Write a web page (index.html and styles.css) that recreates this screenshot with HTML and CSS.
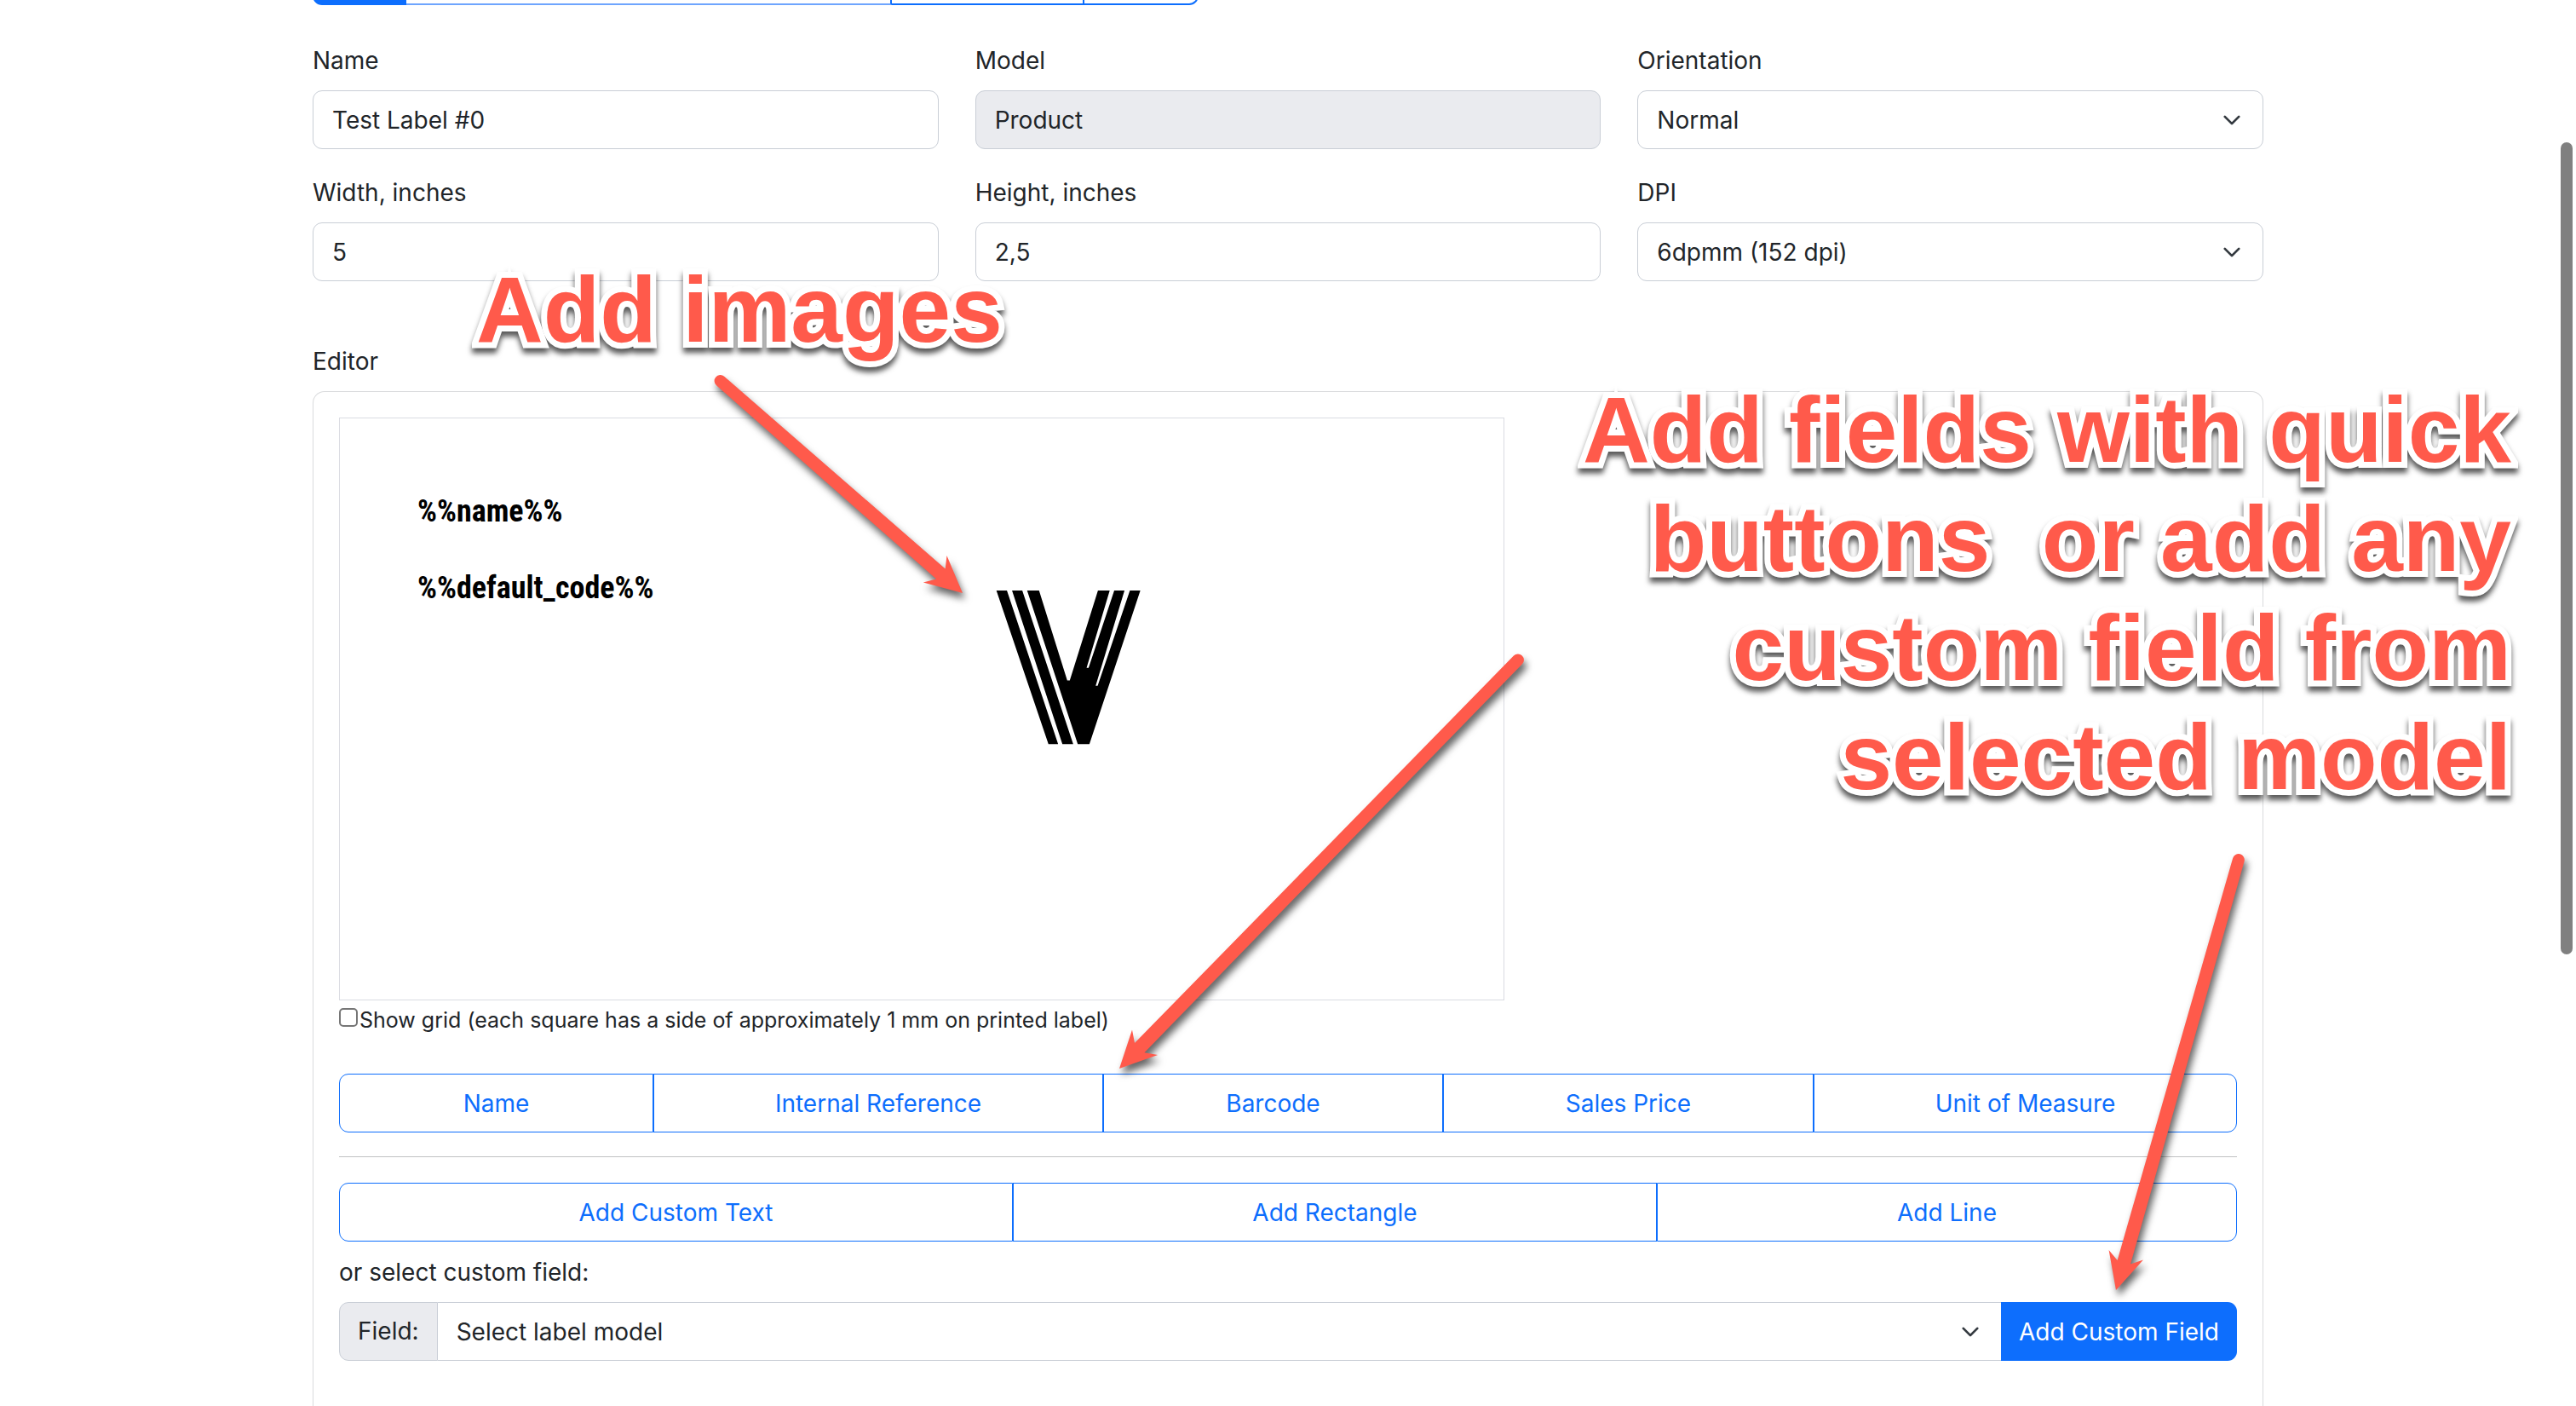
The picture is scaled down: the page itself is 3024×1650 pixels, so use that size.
FILE: index.html
```html
<!DOCTYPE html>
<html lang="en">
<head>
<meta charset="utf-8">
<title>Label editor</title>
<link rel="stylesheet" href="styles.css">
</head>
<body>
<main class="page">
  <div class="toolbar">
    <button class="tool tool-solid" type="button" aria-label="Save"></button>
    <button class="tool tool-muted" type="button" aria-label="Preview" disabled></button>
    <button class="tool" type="button" aria-label="Copy"></button>
    <button class="tool" type="button" aria-label="Close"></button>
  </div>

  <form class="settings">
    <div class="field">
      <label class="label" for="name">Name</label>
      <input class="control" id="name" type="text" value="Test Label #0">
    </div>
    <div class="field">
      <label class="label" for="model">Model</label>
      <input class="control" id="model" type="text" value="Product" disabled>
    </div>
    <div class="field">
      <label class="label" for="orientation">Orientation</label>
      <select class="control select" id="orientation"><option>Normal</option></select>
    </div>
    <div class="field">
      <label class="label" for="width">Width, inches</label>
      <input class="control" id="width" type="text" value="5">
    </div>
    <div class="field">
      <label class="label" for="height">Height, inches</label>
      <input class="control" id="height" type="text" value="2,5">
    </div>
    <div class="field">
      <label class="label" for="dpi">DPI</label>
      <select class="control select" id="dpi"><option>6dpmm (152 dpi)</option></select>
    </div>
  </form>

  <div class="label">Editor</div>
  <section class="card">
    <div class="canvas">
      <div class="item item-name">%%name%%</div>
      <div class="item item-code">%%default_code%%</div>
      <svg class="item-logo" viewBox="205 155 515 545" aria-hidden="true">
        <path d="M210 158H247L427 698H393Z M265 158H301L480 698H442Z M318 158H360L459 474H468L567 158H716L537 698H496Z"/>
        <path fill="#fff" d="M609 156H625L534 430H527Z M661 156H680L566 493H559Z"/>
      </svg>
    </div>
    <div class="grid-toggle">
      <input class="checkbox" id="grid" type="checkbox">
      <label for="grid">Show grid (each square has a side of approximately 1 mm on printed label)</label>
    </div>
    <div class="group group-fields">
      <button class="btn" type="button">Name</button>
      <button class="btn" type="button">Internal Reference</button>
      <button class="btn" type="button">Barcode</button>
      <button class="btn" type="button">Sales Price</button>
      <button class="btn" type="button">Unit of Measure</button>
    </div>
    <hr class="rule">
    <div class="group group-shapes">
      <button class="btn" type="button">Add Custom Text</button>
      <button class="btn" type="button">Add Rectangle</button>
      <button class="btn" type="button">Add Line</button>
    </div>
    <div class="label hint">or select custom field:</div>
    <div class="input-group">
      <label class="prefix" for="custom">Field:</label>
      <select class="control select custom" id="custom"><option>Select label model</option></select>
      <button class="submit" type="button">Add Custom Field</button>
    </div>
  </section>
</main>

<svg class="arrows" aria-hidden="true">
  <path transform="translate(1130 696) rotate(41.2)" d="M0 0L-43 21L-34 8L-378 7A7 7 0 0 1 -378 -7L-34 -8L-43 -21Z"/>
  <path transform="translate(1314 1254) rotate(134.3)" d="M0 0L-43 21L-34 8L-670 7A7 7 0 0 1 -670 -7L-34 -8L-43 -21Z"/>
  <path transform="translate(2484 1514) rotate(105.9)" d="M0 0L-43 21L-34 8L-525 7A7 7 0 0 1 -525 -7L-34 -8L-43 -21Z"/>
</svg>
<div class="note note-images">Add images</div>
<div class="note note-fields">Add fields with quick
buttons  or add any
custom field from
selected model</div>
<div class="scrollbar"></div>
</body>
</html>
```
FILE: styles.css
```css
* { box-sizing: border-box; }

body {
  margin: 0;
  position: relative;
  height: 100vh;
  overflow: hidden;
  background: #fff;
  color: #212529;
  font: 28px/43px Inter, "Noto Sans", sans-serif;
}

button, input, select { font: inherit; color: inherit; margin: 0; }

.page {
  display: flex;
  flex-direction: column;
  max-width: 2380px;
  min-height: 100vh;
  margin: 0 auto;
  padding: 0 45px;
}

/* Toolbar, scrolled almost out of view */
.toolbar {
  display: grid;
  grid-template-columns: 110px 570px 226px 134px;
  height: 69px;
  margin-top: -63px;
}
.tool { border: 2px solid #0d6efd; background: none; padding: 0; }
.tool + .tool { border-left-width: 0; }
.tool-solid { background: #0d6efd; }
.tool-muted { border-color: #6ea5fe; border-right-color: #0d6efd; }
.tool:first-child { border-radius: 11px 0 0 11px; }
.tool:last-child { border-radius: 0 11px 11px 0; }

.settings {
  display: grid;
  grid-template-columns: repeat(3, 1fr);
  gap: 30px 43px;
  margin: 44px 0 73px;
}
.field { display: flex; flex-direction: column; }
.label { margin-bottom: 13px; }

.control {
  width: 100%;
  height: 69px;
  padding: 1px 22px 0;
  border: 1px solid #c9ced6;
  border-radius: 11px;
  background-color: #fff;
}
.control:disabled { background-color: #eaebef; opacity: 1; }
.select {
  appearance: none;
  background-image: url("data:image/svg+xml,%3Csvg xmlns='http://www.w3.org/2000/svg' viewBox='0 0 16 16'%3E%3Cpath fill='none' stroke='%23343a40' stroke-linecap='round' stroke-linejoin='round' stroke-width='2' d='m2 5 6 6 6-6'/%3E%3C/svg%3E");
  background-repeat: no-repeat;
  background-size: 22px 22px;
  background-position: right 25px center;
}

.card {
  flex: 1;
  padding: 30px;
  border: 1px solid #dadbdd;
  border-bottom: 0;
  border-radius: 14px 14px 0 0;
}

.canvas {
  position: relative;
  width: 1368px;
  height: 684px;
  border: 1px solid #dadbe2;
}
.item {
  position: absolute;
  left: 91px;
  color: #000;
  font: bold 36px/42px "Roboto Condensed", Roboto, sans-serif;
  white-space: nowrap;
}
.item-name { top: 88px; }
.item-code { top: 178px; }
.item-logo { position: absolute; left: 769px; top: 201px; width: 172px; height: 182px; }

.grid-toggle {
  display: flex;
  align-items: center;
  gap: 2px;
  margin: 4px 0 44px;
  font-size: 25px;
  line-height: 38px;
}
.checkbox {
  appearance: none;
  width: 22px;
  height: 22px;
  margin-bottom: 6px;
  border: 2px solid #767676;
  border-radius: 5px;
  background: #fff;
}

.group { display: grid; height: 69px; }
.group-fields { grid-template-columns: 369fr 528fr 399fr 435fr 497fr; }
.group-shapes { grid-template-columns: 791fr 756fr 681fr; }
.btn {
  padding: 1px 0 0;
  border: 1px solid #0d6efd;
  background: #fff;
  color: #0d6efd;
}
.btn:first-child { border-radius: 11px 0 0 11px; }
.btn:last-child { border-radius: 0 11px 11px 0; }

.rule { height: 1px; margin: 28px 0 30px; border: 0; background: #c0c1c3; }
.hint { margin-top: 15px; }

.input-group { display: flex; }
.prefix {
  padding: 12px 21px;
  border: 1px solid #c9ced6;
  border-radius: 11px 0 0 11px;
  background: #eaebef;
}
.custom { flex: 1; width: auto; border-width: 1px 0; border-radius: 0; }
.submit {
  width: 277px;
  padding: 1px 0 0;
  border: 0;
  border-radius: 0 11px 11px 0;
  background: #0d6efd;
  color: #fff;
}

/* Annotations laid over the page */
.arrows {
  position: absolute;
  top: 0;
  left: 0;
  width: 100%;
  height: 100%;
  fill: #ff5a4b;
  filter: drop-shadow(3px 7px 4px rgba(0, 0, 0, .6));
  pointer-events: none;
}
.note {
  position: absolute;
  color: #ff5a4b;
  font: bold 109px/128px "Liberation Sans", Arial, sans-serif;
  white-space: pre;
  -webkit-text-stroke: 14px #fff;
  paint-order: stroke fill;
  stroke-linejoin: round;
  filter: drop-shadow(0 6px 3px rgba(0, 0, 0, .65));
  pointer-events: none;
}
.note-images { left: 559px; top: 299px; }
.note-fields { right: 76px; top: 440px; text-align: right; }

.scrollbar {
  position: absolute;
  right: 4px;
  top: 167px;
  width: 14px;
  height: 953px;
  border-radius: 7px;
  background: #808080;
}
```
